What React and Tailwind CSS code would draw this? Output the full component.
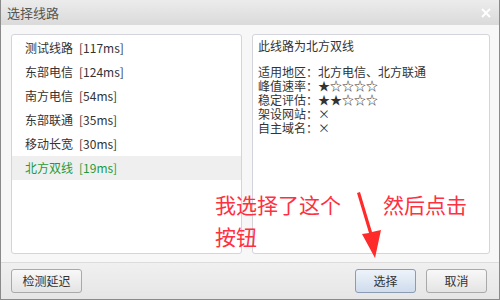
import React from "react";

const lines = [
  { name: "测试线路", ms: "[117ms]" },
  { name: "东部电信", ms: "[124ms]" },
  { name: "南方电信", ms: "[54ms]" },
  { name: "东部联通", ms: "[35ms]" },
  { name: "移动长宽", ms: "[30ms]" },
  { name: "北方双线", ms: "[19ms]", active: true },
];

const font = { fontFamily: '"Noto Sans CJK SC", "DejaVu Sans", sans-serif' };

export default function App() {
  return (
    <div
      className="relative w-[500px] h-[300px] overflow-hidden bg-[#f7f7f7] border-l border-r border-b border-[#8a8a8a] flex flex-col text-[#333]"
      style={font}
    >
      {/* Title bar */}
      <div className="h-[25px] shrink-0 flex items-center justify-between pl-[6px] pr-[8px] bg-gradient-to-b from-[#ececec] to-[#dadada]">
        <span className="text-[13px] text-[#555] leading-none">选择线路</span>
        <svg width="10" height="10" viewBox="0 0 10 10">
          <path d="M1 1 L9 9 M9 1 L1 9" stroke="#fff" strokeWidth="2" />
        </svg>
      </div>

      {/* Body */}
      <div className="flex-1 flex gap-[10px] pt-[9px] pl-[10px] pr-[9px] pb-[8px]">
        <div className="w-[231px] bg-white border border-[#d4d4dc] rounded-[3px] pt-[1px]">
          {lines.map((l) => (
            <div
              key={l.name}
              className={`h-[24px] flex items-center pl-[13px] text-[12px] ${
                l.active ? "bg-[#efefef] text-[#1f9a3a]" : "text-[#333]"
              }`}
            >
              <span>{l.name}</span>
              <span className="ml-[6px]">{l.ms}</span>
            </div>
          ))}
        </div>
        <div className="flex-1 bg-white border border-[#d4d4dc] rounded-[3px] pl-[5px] pt-[4px] text-[12px] leading-[14px] text-[#333]">
          <div>此线路为北方双线</div>
          <div className="h-[12px]" />
          <div>适用地区：北方电信、北方联通</div>
          <div>峰值速率：★☆☆☆☆</div>
          <div>稳定评估：★★☆☆☆</div>
          <div>架设网站：×</div>
          <div>自主域名：×</div>
        </div>
      </div>

      {/* Footer */}
      <div className="h-[37px] shrink-0 border-t border-[#dcdcdc] bg-gradient-to-b from-[#f0f0f0] to-[#e6e6e6] flex items-center justify-between pl-[10px] pr-[12px]">
        <button className="w-[71px] h-[24px] border border-[#a9a9a9] rounded-[3px] bg-gradient-to-b from-[#f8f8f8] to-[#e4e4e4] text-[12px] text-[#333]">
          检测延迟
        </button>
        <div className="flex gap-[10px]">
          <button className="w-[61px] h-[24px] border border-[#8a9bb3] rounded-[3px] bg-gradient-to-b from-[#eef3fa] to-[#cfdcec] text-[12px] text-[#333]">
            选择
          </button>
          <button className="w-[61px] h-[24px] border border-[#a9a9a9] rounded-[3px] bg-gradient-to-b from-[#f8f8f8] to-[#e4e4e4] text-[12px] text-[#333]">
            取消
          </button>
        </div>
      </div>

      {/* Annotation overlay */}
      <div className="absolute left-[214px] top-[188px] text-[21px] leading-[32px] text-[#ff3040]">
        我选择了这个
      </div>
      <div className="absolute left-[382px] top-[188px] text-[21px] leading-[32px] text-[#ff3040]">
        然后点击
      </div>
      <div className="absolute left-[214px] top-[220px] text-[21px] leading-[32px] text-[#ff3040]">
        按钮
      </div>
      <svg className="absolute left-[350px] top-[190px]" width="40" height="72" viewBox="0 0 40 72">
        <path d="M6 3 L9 2 L21 42 L30 40 L24 68 L11 44 L18 43 Z" fill="#ff2a2a" />
      </svg>
    </div>
  );
}
